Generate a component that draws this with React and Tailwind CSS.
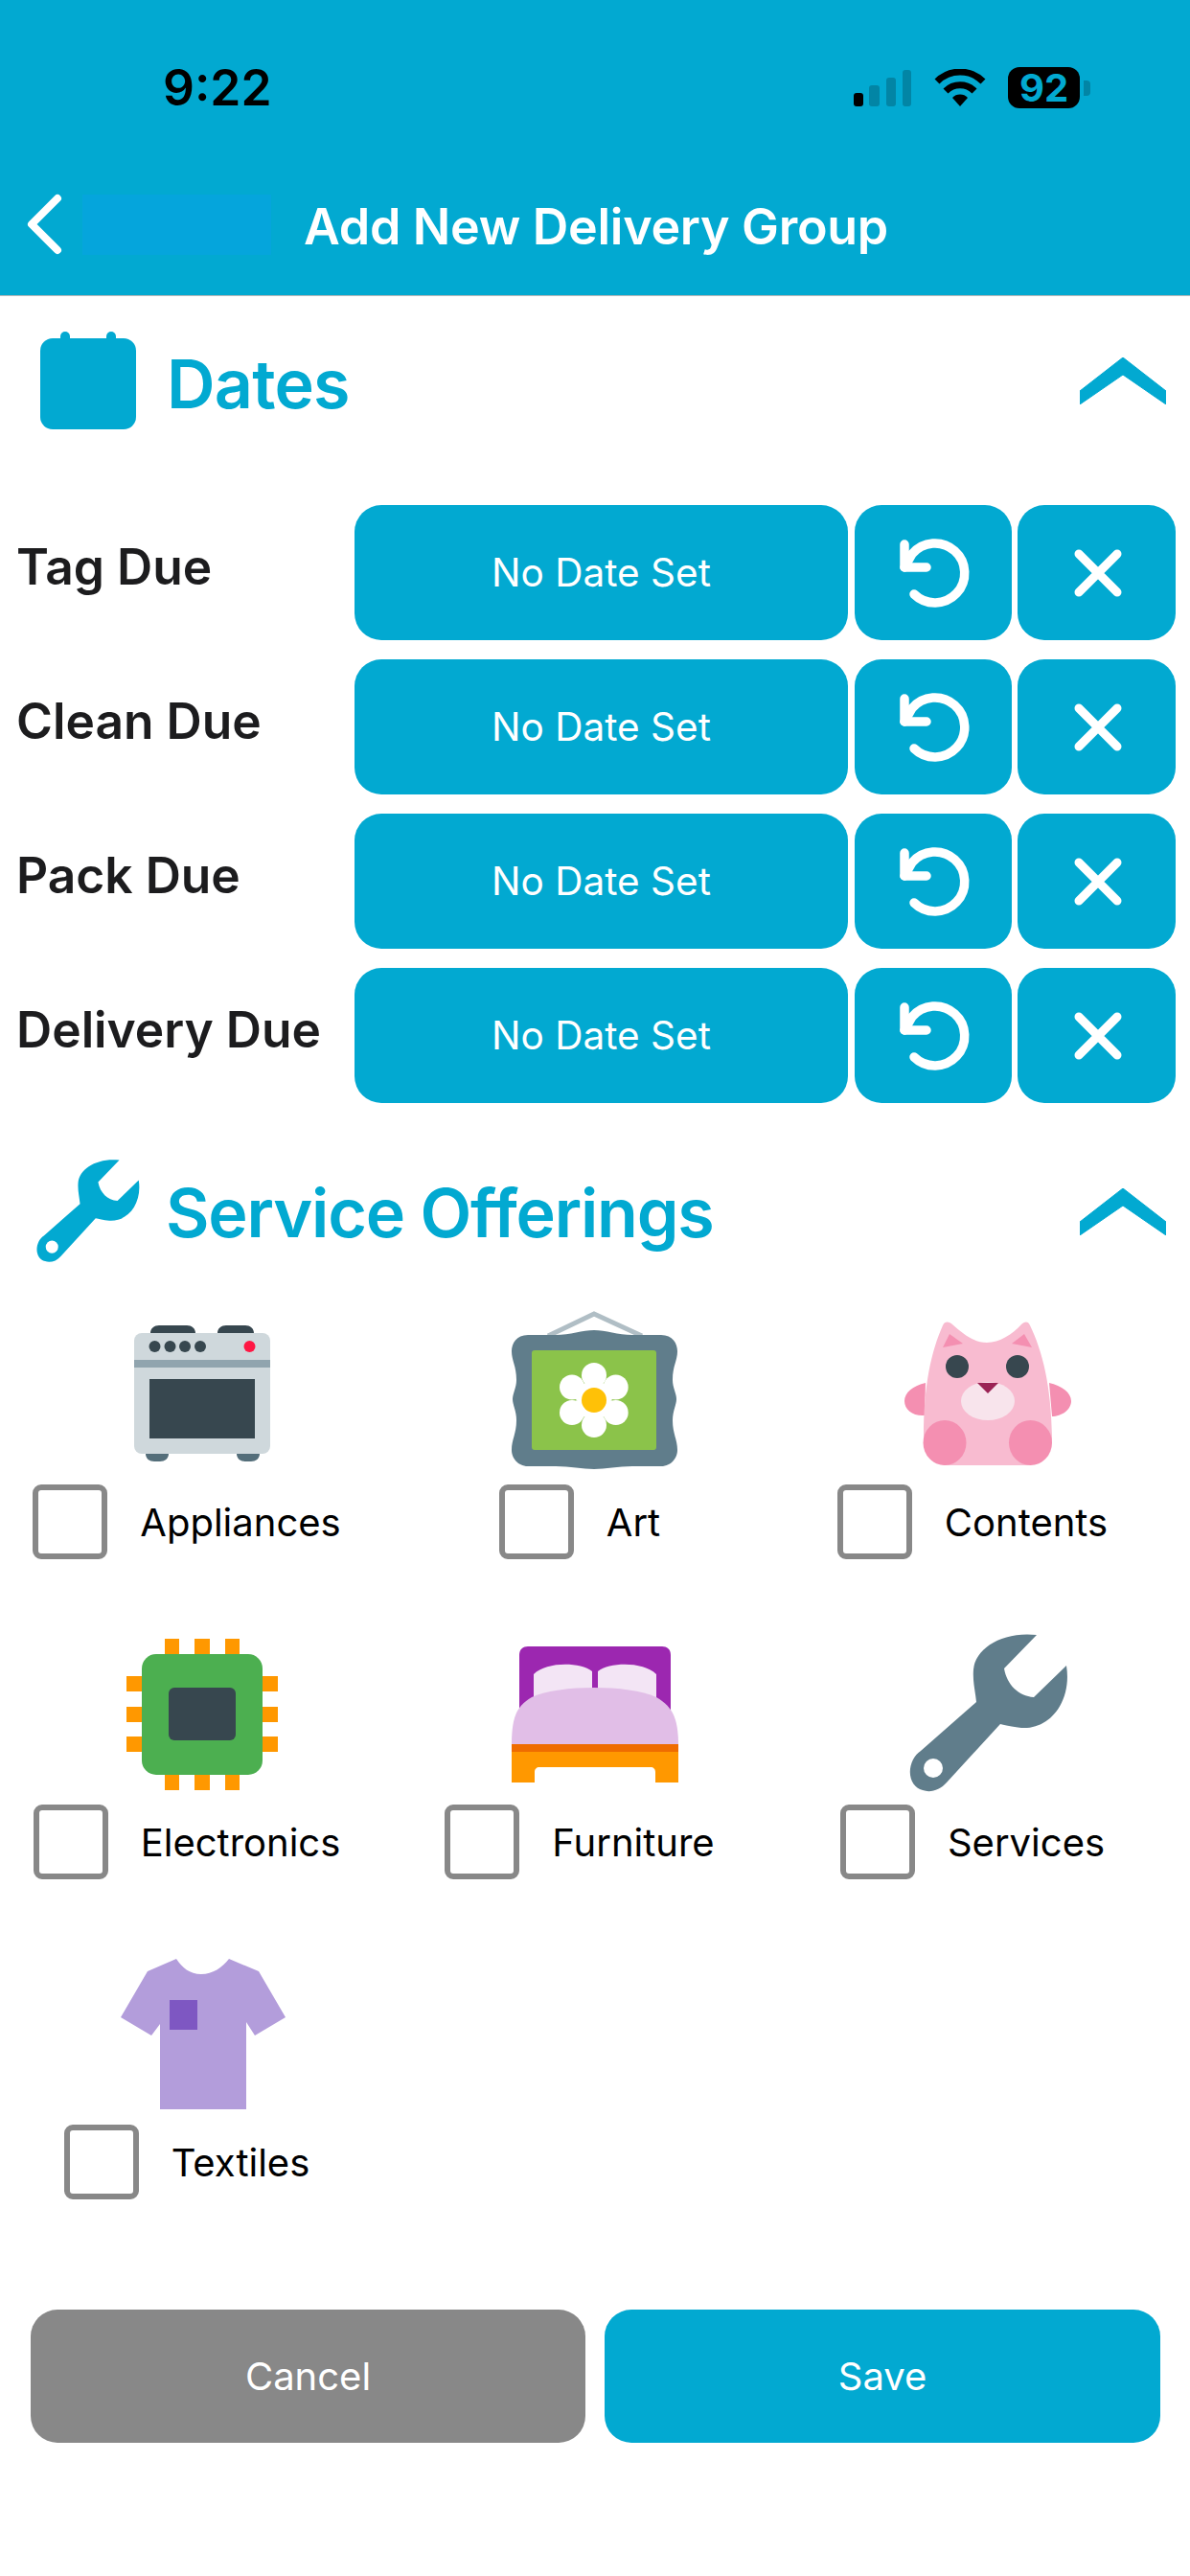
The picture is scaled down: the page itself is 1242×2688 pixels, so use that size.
import React from "react";

const Chevron = () => (
  <svg width="90" height="49" viewBox="0 0 90 49" className="ml-auto mr-[25px]">
    <path d="M45 0 L90 35 L90 49 L45 18 L0 49 L0 35 Z" fill="#02a9d1" stroke="#02a9d1" strokeWidth="1" strokeLinejoin="round" />
  </svg>
);

const WRENCH =
  "M151 16 L117 51 C120 68 132 80 148 81 L182 48 C188 85 165 115 135 113 C125 112 118 110 113 109 L57 170 C50 178 40 181 32 178 C20 175 15 160 22 146 C24 142 27 139 30 137 L88 86 C87 75 84 65 85 52 C87 30 115 12 151 16Z";

const Box = ({ tx, ty, children }) => (
  <svg width="220" height="190" viewBox="0 0 220 190" className="block shrink-0 overflow-visible">
    <g transform={`translate(${tx} ${ty})`}>{children}</g>
  </svg>
);

const Stove = () => (
  <Box tx={-1} ty={2}>
    <path d="M57 31 C57 26 61 23 66 23 L95 23 C100 23 104 26 104 31Z M127 31 C127 26 131 23 136 23 L156 23 C161 23 165 26 165 31Z" fill="#37474F" />
    <path d="M52 157 L76 157 C76 162 72 165 67 165 L61 165 C56 165 52 162 52 157Z M147 157 L171 157 C171 162 167 165 162 165 L156 165 C151 165 147 162 147 157Z" fill="#546E7A" />
    <rect x="40" y="31" width="142" height="126" rx="8" fill="#CFD8DC" />
    <circle cx="61.5" cy="45" r="6" fill="#37474F" />
    <circle cx="77.5" cy="45" r="6" fill="#37474F" />
    <circle cx="93" cy="45" r="6" fill="#37474F" />
    <circle cx="109" cy="45" r="6" fill="#37474F" />
    <circle cx="160.5" cy="45" r="6" fill="#FF1744" />
    <rect x="40" y="59" width="142" height="8" fill="#90A4AE" />
    <rect x="56" y="79" width="110" height="62" fill="#37474F" />
  </Box>
);

const Art = () => (
  <Box tx={-1} ty={-8}>
    <path d="M62 44 L110 21 L160 44" fill="none" stroke="#B0BEC5" strokeWidth="5" />
    <path d="M110 38 C122 38 135 43 150 43 L180 43 C192 43 197 52 197 60 C197 70 192 75 192 90 C192 98 196 104 196 110 C196 116 192 122 192 132 C192 146 197 152 197 163 C197 172 190 180 180 180 L150 180 C135 180 122 183 110 183 C98 183 85 180 70 180 L41 180 C31 180 24 172 24 163 C24 152 29 146 29 132 C29 122 25 116 25 110 C25 104 29 98 29 90 C29 75 24 70 24 60 C24 52 29 43 41 43 L70 43 C85 43 98 38 110 38Z" fill="#607D8B" />
    <rect x="45" y="59" width="130" height="104" rx="3" fill="#8BC34A" />
    <path d="M110 111 L110 85 M110 111 L110 137 M110 110 L132 98 M110 112 L132 124 M110 110 L88 98 M110 112 L88 124" stroke="#fff" strokeWidth="19" />
    <circle cx="110" cy="85" r="13" fill="#fff" />
    <circle cx="132.7" cy="97.5" r="13" fill="#fff" />
    <circle cx="132.7" cy="124" r="13" fill="#fff" />
    <circle cx="110" cy="137" r="13" fill="#fff" />
    <circle cx="87" cy="124" r="13" fill="#fff" />
    <circle cx="87" cy="97.5" r="13" fill="#fff" />
    <circle cx="110" cy="111" r="13" fill="#FFC107" />
  </Box>
);

const Toy = () => (
  <Box tx={-1} ty={2}>
    <path d="M46 83 C33 86 24 93 24 102 C24 111 33 118 45 117Z M175 83 C188 86 198 93 198 102 C198 111 188 118 178 118Z" fill="#F48FB1" />
    <path d="M64 23 C66 18 71 19 74 22 C85 32 97 41 110 41 C123 41 137 32 146 22 C149 19 153 18 155 23 C168 50 177 85 178 140 C178 158 165 169 150 169 L70 169 C55 169 44 158 44 140 C44 85 52 50 64 23Z" fill="#F8BBD0" />
    <path d="M71 32 L85 42 L64 46Z M149 32 L136 42 L157 46Z" fill="#F48FB1" />
    <circle cx="79" cy="66" r="12" fill="#37474F" />
    <circle cx="142" cy="66" r="12" fill="#37474F" />
    <ellipse cx="111" cy="102" rx="28" ry="20" fill="#F8E4EC" />
    <path d="M100 83 L122 83 L111 94Z" fill="#9B2355" />
    <ellipse cx="66" cy="145.5" rx="22.5" ry="23.5" fill="#F48FB1" />
    <ellipse cx="155.5" cy="145.5" rx="22.5" ry="23.5" fill="#F48FB1" />
  </Box>
);

const Chip = () => (
  <Box tx={9} ty={-2}>
    <path d="M62 20h15v16h-15z M93 20h16v16h-16z M125 20h15v16h-15z M62 162h15v16h-15z M93 162h16v16h-16z M125 162h15v16h-15z M22 59h16v16h-16z M22 91h16v16h-16z M22 122h16v16h-16z M164 59h16v16h-16z M164 91h16v16h-16z M164 122h16v16h-16z" fill="#FF9800" />
    <rect x="38" y="36" width="126" height="126" rx="15" fill="#4CAF50" />
    <rect x="66" y="71" width="70" height="55" rx="6" fill="#37474F" />
  </Box>
);

const Bed = () => (
  <Box tx={-1} ty={-2}>
    <path d="M32 95 L32 37 C32 31 36 28 41 28 L181 28 C186 28 190 31 190 37 L190 95Z" fill="#9C27B0" />
    <path d="M47 90 L47 57 C60 44 95 44 108 54 L108 90Z M114 90 L114 54 C127 44 162 44 175 57 L175 90Z" fill="#F3E5F5" />
    <path d="M24 131 C24 100 30 90 45 81 C60 74 85 71 110 71 C135 71 160 74 175 81 C190 90 198 100 198 131Z" fill="#E1BEE7" />
    <rect x="24" y="130" width="174" height="8" fill="#EF6C00" />
    <path d="M24 138 L198 138 L198 170 L174 170 L174 159 C174 156 172 154 169 154 L53 154 C50 154 48 156 48 159 L48 170 L24 170Z" fill="#FF9800" />
  </Box>
);

const Wrench = () => (
  <Box tx={10} ty={-2}>
    <path d={WRENCH} fill="#607D8B" />
    <circle cx="43" cy="155" r="10" fill="#fff" />
  </Box>
);

const Shirt = () => (
  <Box tx={9} ty={-6}>
    <path d="M74 24 C80 33 88 40 100 40 C112 40 122 33 129 24 L160 37 L188 85 L156 104 L147 90 L147 181 L57 181 L57 92 L48 104 L16 85 L44 37Z" fill="#B39DDB" />
    <rect x="67" y="67" width="29" height="31" fill="#7E57C2" />
  </Box>
);

const items = [
  ["Appliances", Stove],
  ["Art", Art],
  ["Contents", Toy],
  ["Electronics", Chip],
  ["Furniture", Bed],
  ["Services", Wrench],
  ["Textiles", Shirt],
];

const Resets = () => (
  <svg width="80" height="80" viewBox="0 0 80 80" fill="none" stroke="#fff" strokeWidth="9.5" strokeLinecap="round" strokeLinejoin="round" className="translate-x-[2px]">
    <path d="M8 10 L8 34 L31 34" />
    <path d="M8 34 L16 20 A31 31 0 1 1 18 62" />
  </svg>
);

const Cross = () => (
  <svg width="50" height="50" viewBox="0 0 50 50" stroke="#fff" strokeWidth="9" strokeLinecap="round" className="translate-x-[1px]">
    <path d="M5 5 L45 45 M45 5 L5 45" />
  </svg>
);

const DateRow = ({ label }) => (
  <div className="flex items-center h-[141px]">
    <div className="w-[370px] pl-[17px] pb-[12px] text-[51.5px] font-semibold text-[#1c1c1e] whitespace-nowrap">{label}</div>
    <button className="w-[515px] h-full rounded-[28px] bg-[#02a9d1] text-white text-[40.5px] pt-[2px] flex items-center justify-center">No Date Set</button>
    <button className="ml-[7px] w-[164px] h-full rounded-[28px] bg-[#02a9d1] flex items-center justify-center"><Resets /></button>
    <button className="ml-[6px] w-[165px] h-full rounded-[28px] bg-[#02a9d1] flex items-center justify-center"><Cross /></button>
  </div>
);

export default function App() {
  return (
    <div className="w-[1242px] h-[2688px] bg-white overflow-hidden [font-family:Inter,sans-serif]">
      <header className="h-[309px] bg-[#02a9d1] border-b border-[#b8b8b8] relative">
        <div className="flex items-center h-[43px] translate-y-[70px]">
          <span className="ml-[170px] text-[51.5px] leading-none font-semibold text-black">9:22</span>
          <div className="ml-auto mr-[104px] flex items-center">
            <svg width="62" height="40" viewBox="0 0 62 40" className="block">
              <rect x="1" y="25" width="10" height="14" rx="3" fill="#000" />
              <rect x="17" y="17" width="11" height="22" rx="3" fill="#0285a5" />
              <rect x="35" y="9" width="10" height="30" rx="3" fill="#0285a5" />
              <rect x="52" y="1" width="9" height="38" rx="3" fill="#0285a5" />
            </svg>
            <svg width="54" height="40" viewBox="0 0 54 40" className="ml-[23px] block">
              <path d="M3 13 A34 34 0 0 1 51 13 M12 23 A21 21 0 0 1 42 23" fill="none" stroke="#000" strokeWidth="7" />
              <path d="M19 30 A11 11 0 0 1 35 30 L27 39Z" fill="#000" />
            </svg>
            <div className="ml-[23px] w-[75px] h-[43px] rounded-[12px] bg-black flex items-center justify-center text-[40px] font-bold leading-none text-[#02a9d1]">92</div>
            <div className="ml-[4px] w-[7px] h-[16px] rounded-r-[4px] bg-[#0285a5]" />
          </div>
        </div>
        <div className="absolute left-0 right-0 top-[200px] h-[68px] flex items-center">
          <svg width="40" height="64" viewBox="0 0 40 64" fill="none" stroke="#fff" strokeWidth="8" strokeLinecap="round" strokeLinejoin="round" className="ml-[27px] block">
            <path d="M33 5 L6 32 L33 59" />
          </svg>
          <div className="ml-[19px] w-[197px] h-[63px] bg-[#05a5dc]" />
          <div className="ml-[34px] pt-[6px] text-[52px] tracking-[-0.3px] font-semibold text-white whitespace-nowrap">Add New Delivery Group</div>
        </div>
      </header>

      <section className="mt-[21px] pl-[42px] h-[134px] flex items-center">
        <svg width="100" height="102" viewBox="0 0 100 102" className="block shrink-0">
          <rect x="21" y="0" width="10" height="20" rx="5" fill="#02a9d1" />
          <rect x="69" y="0" width="10" height="20" rx="5" fill="#02a9d1" />
          <rect x="0" y="7" width="100" height="95" rx="13" fill="#02a9d1" />
        </svg>
        <h2 className="ml-[32px] text-[70px] tracking-[-0.8px] leading-none font-semibold text-[#02a9d1] pt-[8px]">Dates</h2>
        <Chevron />
      </section>

      <div className="mt-[63px] flex flex-col gap-[20px]">
        {["Tag Due", "Clean Due", "Pack Due", "Delivery Due"].map((l) => (
          <DateRow key={l} label={l} />
        ))}
      </div>

      <section className="mt-[46px] pl-[36px] h-[134px] flex items-center">
        <svg width="112" height="112" viewBox="15 12 172 172" className="block shrink-0">
          <path d={WRENCH} fill="#02a9d1" />
          <circle cx="43" cy="155" r="10" fill="#fff" />
        </svg>
        <h2 className="ml-[25px] text-[70px] tracking-[-1.2px] leading-none font-semibold text-[#02a9d1] pt-[4px]">Service Offerings</h2>
        <Chevron />
      </section>

      <div className="mt-[27px] pl-[6px] grid grid-cols-[repeat(3,410px)] auto-rows-[334px]">
        {items.map(([label, Icon]) => (
          <div key={label} className="flex flex-col items-center">
            <Icon />
            <label className="mt-[1px] pr-[32px] flex items-center gap-[34px]">
              <span className="block w-[78px] h-[78px] rounded-[9px] border-[6px] border-[#888888] bg-white" />
              <span className="pt-[2px] text-[40px] text-black">{label}</span>
            </label>
          </div>
        ))}
      </div>

      <div className="mt-[50px] pl-[32px] flex gap-[20px]">
        <button className="w-[579px] h-[139px] rounded-[28px] bg-[#888888] text-white text-[40px] pt-[1px]">Cancel</button>
        <button className="w-[580px] h-[139px] rounded-[28px] bg-[#02a9d1] text-white text-[40px] pt-[1px]">Save</button>
      </div>
    </div>
  );
}
